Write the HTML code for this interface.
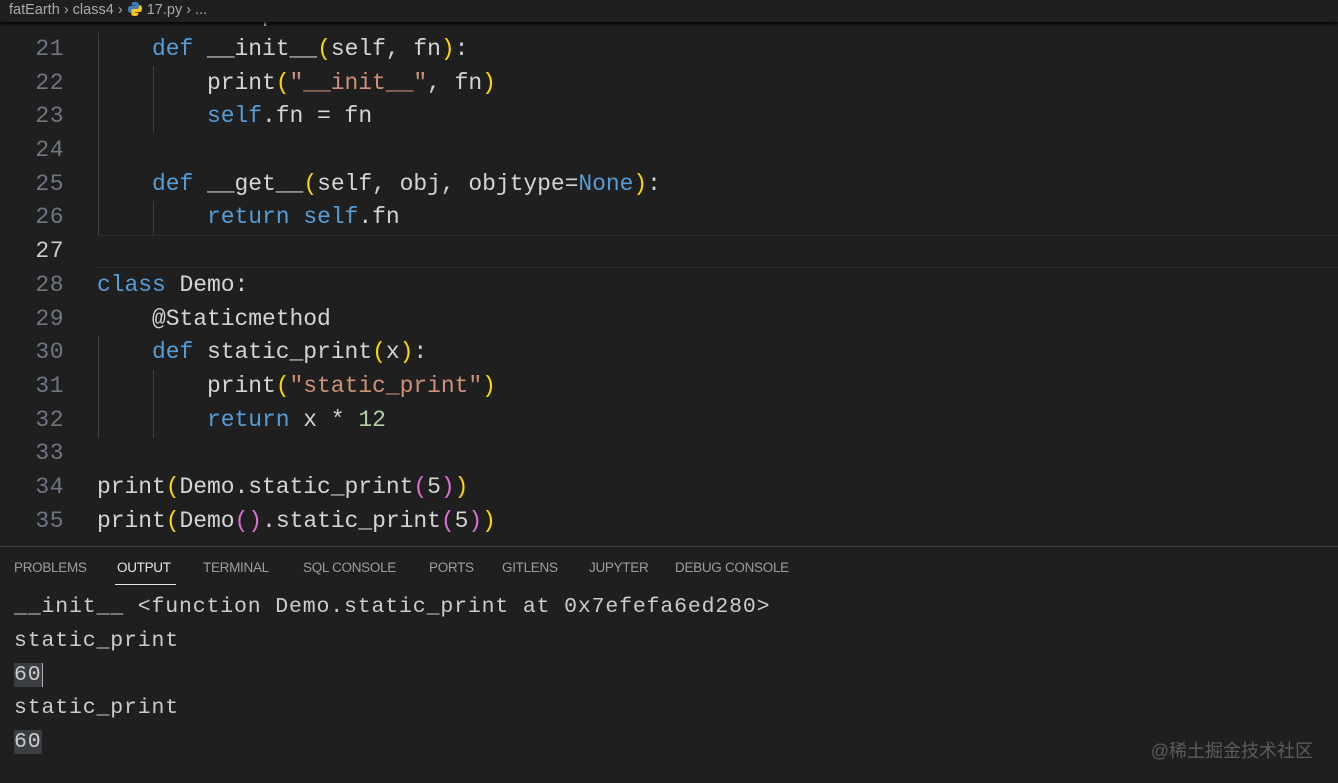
<!DOCTYPE html>
<html><head><meta charset="utf-8"><style>
*{margin:0;padding:0;box-sizing:border-box}
html,body{width:1338px;height:783px}
body{background:#1f1f1f;overflow:hidden;position:relative;font-family:"Liberation Mono",monospace;color:#cccccc}
.code{position:absolute;left:0;top:-0.7px;width:1338px}
.l{height:33.7px;line-height:33.7px;font-size:23px;letter-spacing:-0.05px;white-space:pre;position:relative}
.n{position:absolute;left:0;width:64px;text-align:right;color:#6e7681;letter-spacing:0.5px}
.cur .n{color:#cccccc}
.t{position:absolute;left:97px;color:#d4d4d4}
.k{color:#569cd6}.s{color:#ce9178}.y{color:#ffd700}.p{color:#da70d6}.m{color:#b5cea8}
.g{position:absolute;width:1px;background:#404040}
.crumb{position:absolute;left:0;top:0;width:1338px;height:22px;background:#1f1f1f;font-family:"Liberation Sans",sans-serif;font-size:14.5px;color:#a9a9a9;line-height:20px;padding-left:9px;box-shadow:0 2px 4px #000;z-index:2}
.panel{position:absolute;left:0;top:546px;width:1338px;height:237px;background:#1f1f1f;border-top:1px solid #3c3c3c;overflow:hidden}
.tabs{position:absolute;top:13px;left:14px;font-family:"Liberation Sans",sans-serif;font-size:13.5px;color:#9d9d9d}
.tabs span{position:absolute;white-space:nowrap;letter-spacing:-0.3px}
.o{position:absolute;left:14px;height:33.7px;line-height:33.7px;font-size:21.5px;letter-spacing:0.85px;white-space:pre;color:#cccccc}
.wm{position:absolute;right:25px;top:737px;font-family:"Liberation Sans","Noto Sans CJK SC",sans-serif;font-size:18px;color:#5c5c5c}
</style></head><body>
<div class="crumb">fatEarth <span>›</span> class4 <span>›</span> <svg width="16" height="16" viewBox="0 0 16 16" style="vertical-align:-3px"><path d="M8 1C4.5 1 4.7 2.5 4.7 2.5V4.5H8.1V5H3.3S1 4.8 1 8.3s2 3.4 2 3.4H4.3V10s-.1-2 2-2h3.4s2 0 2-1.9V3s.3-2-3.7-2z" fill="#3f7cc0"/><path d="M8 15c3.5 0 3.3-1.5 3.3-1.5V11.5H7.9V11h4.8S15 11.2 15 7.7s-2-3.4-2-3.4h-1.3V6s.1 2-2 2H6.3s-2 0-2 1.9V13s-.3 2 3.7 2z" fill="#f5c518"/></svg> 17.py <span>›</span> ...</div>
<div class="code">
<div class="l"><span class="n">20</span><span class="t"><span class="k">class</span> Descriptor:</span></div>
<div class="l"><span class="n">21</span><span class="t">    <span class="k">def</span> __init__<span class="y">(</span>self, fn<span class="y">)</span>:</span></div>
<div class="l"><span class="n">22</span><span class="t">        print<span class="y">(</span><span class="s">"__init__"</span>, fn<span class="y">)</span></span></div>
<div class="l"><span class="n">23</span><span class="t">        <span class="k">self</span>.fn = fn</span></div>
<div class="l"><span class="n">24</span><span class="t"></span></div>
<div class="l"><span class="n">25</span><span class="t">    <span class="k">def</span> __get__<span class="y">(</span>self, obj, objtype=<span class="k">None</span><span class="y">)</span>:</span></div>
<div class="l"><span class="n">26</span><span class="t">        <span class="k">return</span> <span class="k">self</span>.fn</span></div>
<div class="l cur"><span class="n">27</span><span class="t"></span></div>
<div class="l"><span class="n">28</span><span class="t"><span class="k">class</span> Demo:</span></div>
<div class="l"><span class="n">29</span><span class="t">    @Staticmethod</span></div>
<div class="l"><span class="n">30</span><span class="t">    <span class="k">def</span> static_print<span class="y">(</span>x<span class="y">)</span>:</span></div>
<div class="l"><span class="n">31</span><span class="t">        print<span class="y">(</span><span class="s">"static_print"</span><span class="y">)</span></span></div>
<div class="l"><span class="n">32</span><span class="t">        <span class="k">return</span> x * <span class="m">12</span></span></div>
<div class="l"><span class="n">33</span><span class="t"></span></div>
<div class="l"><span class="n">34</span><span class="t">print<span class="y">(</span>Demo.static_print<span class="p">(</span>5<span class="p">)</span><span class="y">)</span></span></div>
<div class="l"><span class="n">35</span><span class="t">print<span class="y">(</span>Demo<span class="p">()</span>.static_print<span class="p">(</span>5<span class="p">)</span><span class="y">)</span></span></div>
</div>
<div style="position:absolute;left:97px;top:235px;width:1241px;height:33px;border-top:1px solid #2c2c2c;border-bottom:1px solid #2c2c2c"></div>
<div class="g" style="left:98px;top:33px;height:202px"></div>
<div class="g" style="left:153px;top:66px;height:66px"></div>
<div class="g" style="left:153px;top:201px;height:34px"></div>
<div class="g" style="left:98px;top:336px;height:102px"></div>
<div class="g" style="left:153px;top:370px;height:68px"></div>
<div class="panel">
<div class="tabs">
<span style="left:0">PROBLEMS</span>
<span style="left:103px;color:#e7e7e7">OUTPUT</span>
<span style="left:189px">TERMINAL</span>
<span style="left:289px">SQL CONSOLE</span>
<span style="left:415px">PORTS</span>
<span style="left:488px">GITLENS</span>
<span style="left:575px">JUPYTER</span>
<span style="left:661px">DEBUG CONSOLE</span>
</div>
<div style="position:absolute;left:115px;top:37px;width:61px;height:1px;background:#e7e7e7"></div>
</div>
<div class="o" style="top:591px">__init__ &lt;function Demo.static_print at 0x7efefa6ed280&gt;</div>
<div class="o" style="top:625px">static_print</div>
<div class="o" style="top:659px"><span style="background:#3a3d41">60</span><span style="border-left:1px solid #aeafad"></span></div>
<div class="o" style="top:692px">static_print</div>
<div class="o" style="top:726px"><span style="background:#3a3d41">60</span></div>
<div class="wm">@稀土掘金技术社区</div>
</body></html>
